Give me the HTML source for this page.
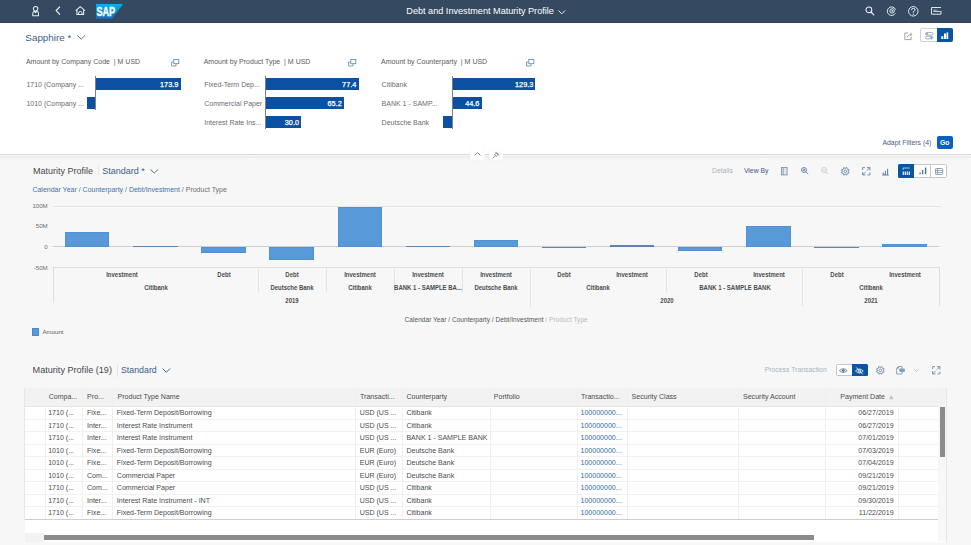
<!DOCTYPE html>
<html><head><meta charset="utf-8"><style>
*{margin:0;padding:0;box-sizing:border-box}
html,body{width:971px;height:545px;overflow:hidden;background:#f7f7f7;font-family:"Liberation Sans",sans-serif;color:#32363a}
.a{position:absolute;white-space:nowrap}
svg{position:absolute;overflow:visible}
</style></head><body>
<div class="a" style="left:0px;top:0px;width:971.00px;height:23.00px;background:#354a61;"></div>
<div class="a" style="left:0px;top:21.5px;width:971.00px;height:1.50px;background:#34424f;"></div>
<svg style="left:31.5px;top:5.6px;" width="8.4" height="10.4" viewBox="0 0 8.4 10.4"><circle cx="3.6" cy="2.8" r="2.25" fill="none" stroke="#e9eef3" stroke-width="1.05"/><path d="M0.8 9.7 V7.3 Q0.8 5.6 2.5 5.6 H2.8 L3.6 6.6 L4.4 5.6 H4.7 Q6.5 5.6 6.5 7.3 V9.7 Z" fill="none" stroke="#e9eef3" stroke-width="1.05" stroke-linejoin="round"/></svg>
<svg style="left:55px;top:6.2px;" width="6" height="9.4" viewBox="0 0 6 9.4"><path d="M4.9 0.6 L1.2 4.6 L4.9 8.7" fill="none" stroke="#eef2f6" stroke-width="1.25"/></svg>
<svg style="left:74.8px;top:6.3px;" width="10.6" height="9.2" viewBox="0 0 10.6 9.2"><path d="M0.7 4.6 L5.3 0.7 L9.9 4.6 M1.9 3.7 V8.5 H8.7 V3.7" fill="none" stroke="#e9eef3" stroke-width="1.05" stroke-linejoin="round"/><path d="M3.6 8.5 V7 Q3.6 5.5 5.3 5.5 Q7 5.5 7 7 V8.5" fill="none" stroke="#e9eef3" stroke-width="1"/></svg>
<svg style="left:95.8px;top:4.1px;" width="27.2" height="14.8" viewBox="0 0 27.2 14.8"><defs><linearGradient id="sg" x1="0" y1="0" x2="0" y2="1"><stop offset="0" stop-color="#00b4ef"/><stop offset="1" stop-color="#1a6cc0"/></linearGradient></defs><path d="M0 0 H27.1 L16 14.8 H0 Z" fill="url(#sg)"/><text x="0.4" y="11.95" font-family="Liberation Sans" font-weight="bold" font-size="12.2" fill="#fff" stroke="#fff" stroke-width="0.35" textLength="18.8" lengthAdjust="spacingAndGlyphs">SAP</text></svg>
<div class="a" style="left:406.3px;top:6.83px;font-size:9.15px;color:#ffffff;font-weight:normal;line-height:9.15px;">Debt and Investment Maturity Profile</div>
<svg style="left:557.5px;top:9.5px;" width="8" height="5" viewBox="0 0 8 5"><path d="M0.5 0.5 L3.75 3.8 L7 0.5" fill="none" stroke="#fff" stroke-width="0.9"/></svg>
<svg style="left:864.5px;top:6.3px;" width="10" height="9.5" viewBox="0 0 10 9.5"><circle cx="3.9" cy="3.9" r="2.9" fill="none" stroke="#e9eef3" stroke-width="1.05"/><path d="M6 6 L8.8 8.8" stroke="#e9eef3" stroke-width="1.2" stroke-linecap="round"/></svg>
<svg style="left:886.8px;top:6px;" width="9.4" height="10" viewBox="0 0 9.4 10"><path d="M8.3 7.4 A4.3 4.3 0 1 1 8.6 3.6" fill="none" stroke="#e9eef3" stroke-width="0.95"/><circle cx="5.1" cy="4.9" r="2.2" fill="none" stroke="#e9eef3" stroke-width="1"/><circle cx="5.2" cy="4.9" r="0.8" fill="#e9eef3"/></svg>
<svg style="left:908.4px;top:5.9px;" width="10.6" height="10.6" viewBox="0 0 10.6 10.6"><circle cx="5.3" cy="5.3" r="4.75" fill="none" stroke="#e9eef3" stroke-width="0.95"/><path d="M3.5 4.1 Q3.5 2.3 5.3 2.3 Q7.1 2.3 7.1 3.9 Q7.1 5 5.3 5.7 V6.8" fill="none" stroke="#e9eef3" stroke-width="1"/><circle cx="5.3" cy="8.2" r="0.6" fill="#e9eef3"/></svg>
<svg style="left:930.9px;top:7px;" width="10.4" height="7.8" viewBox="0 0 10.4 7.8"><path d="M10 0.5 H0.5 V7.2 H10 V4" fill="none" stroke="#e9eef3" stroke-width="0.95"/><path d="M2.4 3.2 H4.4 M2.4 4.5 H9.7" stroke="#dfe6ee" stroke-width="0.85"/><path d="M4.8 2.6 V3.8 M6 2.6 V3.8" stroke="#cfd8e2" stroke-width="0.6"/></svg>
<div class="a" style="left:0px;top:23px;width:971.00px;height:131.50px;background:#ffffff;"></div>
<div class="a" style="left:25.3px;top:32.65px;font-size:9.9px;color:#3a5f89;font-weight:normal;line-height:9.9px;">Sapphire *</div>
<svg style="left:76.8px;top:35px;" width="8.4" height="5" viewBox="0 0 8.4 5"><path d="M0.5 0.5 L4.2 4.2 L7.9 0.5" fill="none" stroke="#3a5f89" stroke-width="0.9"/></svg>
<svg style="left:904.2px;top:31.5px;" width="9" height="8.2" viewBox="0 0 9 8.2"><path d="M4.2 1 H0.8 V7.6 H7.2 V4.8" fill="none" stroke="#8a96a2" stroke-width="0.85"/><path d="M2.8 5.6 Q3.6 2.6 7.4 2.4 M6 0.7 L8 2.4 L6.2 4.2" fill="none" stroke="#8a96a2" stroke-width="0.85"/></svg>
<div class="a" style="left:920.3px;top:28.4px;width:32.60px;height:13.70px;background:#fff;border:1px solid #cdd3d9;border-radius:2px;"></div>
<div class="a" style="left:936.8px;top:28.4px;width:16.10px;height:13.70px;background:#0a55a0;border-radius:0 2px 2px 0;"></div>
<svg style="left:924.6px;top:31.6px;" width="8.4" height="7.6" viewBox="0 0 8.4 7.6"><rect x="0.5" y="0.5" width="7.4" height="2.6" rx="1.3" fill="none" stroke="#8aa0b7" stroke-width="0.8"/><rect x="0.5" y="4.3" width="7.4" height="2.6" rx="1.3" fill="none" stroke="#8aa0b7" stroke-width="0.8"/><circle cx="2" cy="1.8" r="0.9" fill="#6d88a6"/><circle cx="6.2" cy="5.6" r="0.9" fill="#6d88a6"/></svg>
<svg style="left:941.3px;top:31.8px;" width="7.6" height="7.2" viewBox="0 0 7.6 7.2"><path d="M0.3 7 V4.2 H2.3 V7 Z M3 7 V1.5 H5 V7 Z M5.5 7 V0.4 H7.2 V7 Z" fill="#fff"/></svg>
<div class="a" style="left:25.9px;top:58.10px;font-size:7px;color:#585b5e;font-weight:normal;line-height:7px;">Amount by Company Code&nbsp; | M USD</div>
<svg style="left:170.5px;top:58.8px;" width="8.5" height="7.5" viewBox="0 0 8.5 7.5"><rect x="2.8" y="0.5" width="5" height="4.2" fill="none" stroke="#5b86b3" stroke-width="0.8"/><path d="M2.5 3 H0.6 V7 H5 V5" fill="none" stroke="#5b86b3" stroke-width="0.8"/></svg>
<div class="a" style="left:26.4px;top:80.60px;font-size:7px;color:#6a6d70;font-weight:normal;line-height:7px;">1710 (Company ...</div>
<div class="a" style="left:95.5px;top:77.8px;width:85.00px;height:12.20px;background:#0c50a2;"></div>
<div class="a" style="right:792.70px;top:80.85px;font-size:7.3px;color:#ffffff;font-weight:normal;line-height:7.3px;-webkit-text-stroke:0.25px #fff;">173.9</div>
<div class="a" style="left:26.4px;top:99.60px;font-size:7px;color:#6a6d70;font-weight:normal;line-height:7px;">1010 (Company ...</div>
<div class="a" style="left:87.1px;top:96.8px;width:7.90px;height:12.20px;background:#0c50a2;"></div>
<div class="a" style="left:95px;top:76.2px;width:0.80px;height:33.70px;background:#7d8084;"></div>
<div class="a" style="left:203.7px;top:58.10px;font-size:7px;color:#585b5e;font-weight:normal;line-height:7px;">Amount by Product Type&nbsp; | M USD</div>
<svg style="left:348px;top:58.8px;" width="8.5" height="7.5" viewBox="0 0 8.5 7.5"><rect x="2.8" y="0.5" width="5" height="4.2" fill="none" stroke="#5b86b3" stroke-width="0.8"/><path d="M2.5 3 H0.6 V7 H5 V5" fill="none" stroke="#5b86b3" stroke-width="0.8"/></svg>
<div class="a" style="left:204.2px;top:80.60px;font-size:7px;color:#6a6d70;font-weight:normal;line-height:7px;">Fixed-Term Dep...</div>
<div class="a" style="left:265.5px;top:77.8px;width:93.00px;height:12.20px;background:#0c50a2;"></div>
<div class="a" style="right:614.70px;top:80.85px;font-size:7.3px;color:#ffffff;font-weight:normal;line-height:7.3px;-webkit-text-stroke:0.25px #fff;">77.4</div>
<div class="a" style="left:204.2px;top:99.60px;font-size:7px;color:#6a6d70;font-weight:normal;line-height:7px;">Commercial Paper</div>
<div class="a" style="left:265.5px;top:96.8px;width:78.40px;height:12.20px;background:#0c50a2;"></div>
<div class="a" style="right:629.30px;top:99.85px;font-size:7.3px;color:#ffffff;font-weight:normal;line-height:7.3px;-webkit-text-stroke:0.25px #fff;">65.2</div>
<div class="a" style="left:204.2px;top:118.60px;font-size:7px;color:#6a6d70;font-weight:normal;line-height:7px;">Interest Rate Ins...</div>
<div class="a" style="left:265.5px;top:115.8px;width:35.70px;height:12.20px;background:#0c50a2;"></div>
<div class="a" style="right:672.00px;top:118.85px;font-size:7.3px;color:#ffffff;font-weight:normal;line-height:7.3px;-webkit-text-stroke:0.25px #fff;">30.0</div>
<div class="a" style="left:265px;top:76.2px;width:0.80px;height:52.70px;background:#7d8084;"></div>
<div class="a" style="left:381.1px;top:58.10px;font-size:7px;color:#585b5e;font-weight:normal;line-height:7px;">Amount by Counterparty&nbsp; | M USD</div>
<svg style="left:526px;top:58.8px;" width="8.5" height="7.5" viewBox="0 0 8.5 7.5"><rect x="2.8" y="0.5" width="5" height="4.2" fill="none" stroke="#5b86b3" stroke-width="0.8"/><path d="M2.5 3 H0.6 V7 H5 V5" fill="none" stroke="#5b86b3" stroke-width="0.8"/></svg>
<div class="a" style="left:381.6px;top:80.60px;font-size:7px;color:#6a6d70;font-weight:normal;line-height:7px;">Citibank</div>
<div class="a" style="left:452.8px;top:77.8px;width:82.70px;height:12.20px;background:#0c50a2;"></div>
<div class="a" style="right:437.70px;top:80.85px;font-size:7.3px;color:#ffffff;font-weight:normal;line-height:7.3px;-webkit-text-stroke:0.25px #fff;">129.3</div>
<div class="a" style="left:381.6px;top:99.60px;font-size:7px;color:#6a6d70;font-weight:normal;line-height:7px;">BANK 1 - SAMP...</div>
<div class="a" style="left:452.8px;top:96.8px;width:28.80px;height:12.20px;background:#0c50a2;"></div>
<div class="a" style="right:491.60px;top:99.85px;font-size:7.3px;color:#ffffff;font-weight:normal;line-height:7.3px;-webkit-text-stroke:0.25px #fff;">44.6</div>
<div class="a" style="left:381.6px;top:118.60px;font-size:7px;color:#6a6d70;font-weight:normal;line-height:7px;">Deutsche Bank</div>
<div class="a" style="left:442.7px;top:115.8px;width:9.60px;height:12.20px;background:#0c50a2;"></div>
<div class="a" style="left:452.3px;top:76.2px;width:0.80px;height:52.70px;background:#7d8084;"></div>
<div class="a" style="left:882.4px;top:139.55px;font-size:6.9px;color:#4a6283;font-weight:normal;line-height:6.9px;">Adapt Filters (4)</div>
<div class="a" style="left:936.7px;top:136.2px;width:16.50px;height:13.10px;background:#0b60bf;border-radius:2px;"></div>
<div class="a" style="left:944.8px;transform:translateX(-50%);top:139.55px;font-size:6.9px;color:#ffffff;font-weight:bold;line-height:6.9px;">Go</div>
<div class="a" style="left:0px;top:154.2px;width:971.00px;height:1.30px;background:#d8d8d8;"></div>
<div class="a" style="left:0px;top:155.5px;width:971.00px;height:4.50px;background:transparent;background:linear-gradient(#ececec,#f7f7f7);"></div>
<div class="a" style="left:470px;top:149px;width:15.00px;height:11.00px;background:#fff;border-radius:2px;box-shadow:0 0 1px rgba(0,0,0,0.12);"></div>
<svg style="left:474.3px;top:151.8px;" width="7" height="4" viewBox="0 0 7 4"><path d="M0.5 3.5 L3.5 0.5 L6.5 3.5" fill="none" stroke="#6a6d70" stroke-width="0.8"/></svg>
<div class="a" style="left:488.5px;top:149px;width:14.50px;height:11.00px;background:#fff;border-radius:2px;box-shadow:0 0 1px rgba(0,0,0,0.12);"></div>
<svg style="left:492px;top:150.8px;" width="8" height="8" viewBox="0 0 8 8"><path d="M3.5 1 L7 4.5 M4.5 1.8 L2.6 3.8 L4.2 5.4 L6.2 3.5 Z M3.4 4.6 L0.8 7.2" fill="none" stroke="#5d7790" stroke-width="0.8"/></svg>
<div style="position:absolute;left:0;top:0.5px;width:971px;height:545px">
<div class="a" style="left:33px;top:166.50px;font-size:9px;color:#45484b;font-weight:normal;line-height:9px;">Maturity Profile</div>
<div class="a" style="left:97.6px;top:164px;width:0.60px;height:12.00px;background:#e8e8e8;"></div>
<div class="a" style="left:102.2px;top:166.50px;font-size:9px;color:#3a5f89;font-weight:normal;line-height:9px;">Standard *</div>
<svg style="left:149.7px;top:168.9px;" width="8.6" height="4.6" viewBox="0 0 8.6 4.6"><path d="M0.5 0.5 L4.3 4 L8.1 0.5" fill="none" stroke="#4d5f73" stroke-width="0.9"/></svg>
<div class="a" style="left:32.4px;top:185.30px;font-size:7px;color:#6a6d70;font-weight:normal;line-height:7px;"><span style="color:#4273a8">Calendar Year</span> / <span style="color:#4273a8">Counterparty</span> / <span style="color:#4273a8">Debt/Investment</span> / Product Type</div>
<div style="position:absolute;left:0;top:-0.7px;width:971px;height:545px">
<div class="a" style="left:712px;top:168.00px;font-size:6.8px;color:#a9b4be;font-weight:normal;line-height:6.8px;">Details</div>
<div class="a" style="left:743.9px;top:167.97px;font-size:6.85px;color:#375a80;font-weight:normal;line-height:6.85px;">View By</div>
<svg style="left:781.2px;top:167.3px;" width="6.6" height="8.4" viewBox="0 0 6.6 8.4"><rect x="0.5" y="0.5" width="5.6" height="7.4" fill="#dde6ef" stroke="#7892ae" stroke-width="0.85"/><path d="M2.2 0.5 V7.9" stroke="#7892ae" stroke-width="0.8"/></svg>
<svg style="left:801px;top:167.5px;" width="7.5" height="7.5" viewBox="0 0 7.5 7.5"><circle cx="3" cy="3" r="2.5" fill="none" stroke="#5b7fa6" stroke-width="0.9"/><path d="M1.6 3 H4.4 M3 1.6 V4.4 M4.8 4.8 L7.2 7.2" stroke="#5b7fa6" stroke-width="0.9"/></svg>
<svg style="left:821px;top:167.5px;" width="7.5" height="7.5" viewBox="0 0 7.5 7.5"><circle cx="3" cy="3" r="2.5" fill="none" stroke="#c4ccd4" stroke-width="0.9"/><path d="M1.6 3 H4.4 M4.8 4.8 L7.2 7.2" stroke="#c4ccd4" stroke-width="0.9"/></svg>
<svg style="left:841.4px;top:167.2px;" width="8.6" height="8.6" viewBox="0 0 8.6 8.6"><path d="M7.30 4.30 L7.25 4.83 L8.07 5.28 L7.66 6.27 L6.76 6.02 L6.42 6.42 L6.02 6.76 L6.27 7.66 L5.28 8.07 L4.83 7.25 L4.30 7.30 L3.77 7.25 L3.32 8.07 L2.33 7.66 L2.58 6.76 L2.18 6.42 L1.84 6.02 L0.94 6.27 L0.53 5.28 L1.35 4.83 L1.30 4.30 L1.35 3.77 L0.53 3.32 L0.94 2.33 L1.84 2.58 L2.18 2.18 L2.58 1.84 L2.33 0.94 L3.32 0.53 L3.77 1.35 L4.30 1.30 L4.83 1.35 L5.28 0.53 L6.27 0.94 L6.02 1.84 L6.42 2.18 L6.76 2.58 L7.66 2.33 L8.07 3.32 L7.25 3.77 Z" fill="none" stroke="#5b7fa6" stroke-width="0.9" stroke-linejoin="round"/><circle cx="4.3" cy="4.3" r="1.3" fill="none" stroke="#5b7fa6" stroke-width="0.8"/></svg>
<svg style="left:861.6px;top:167.3px;" width="8.5" height="8.5" viewBox="0 0 8.5 8.5"><path d="M5 0.6 H7.9 V3.5 M7.9 0.6 L4.9 3.6 M3.5 7.9 H0.6 V5 M0.6 7.9 L3.6 4.9 M0.6 3 V0.6 H3 M7.9 5.5 V7.9 H5.5" fill="none" stroke="#5b7fa6" stroke-width="0.85"/></svg>
<svg style="left:882.4px;top:167.8px;" width="7" height="7.4" viewBox="0 0 7 7.4"><path d="M0.3 7 H6.8 M1.3 6.6 V4.6 M3.4 6.6 V2.8 M5.6 6.6 V0.8" stroke="#5b7fa6" stroke-width="1.05"/></svg>
<div class="a" style="left:898.1px;top:164.4px;width:48.70px;height:13.50px;background:#fff;border:1px solid #c3c7cc;border-radius:1.5px;"></div>
<div class="a" style="left:898.1px;top:164.4px;width:15.90px;height:13.50px;background:#0a55a0;border-radius:1.5px 0 0 1.5px;"></div>
<div class="a" style="left:930.4px;top:164.4px;width:0.80px;height:13.50px;background:#c3c7cc;"></div>
<svg style="left:901.5px;top:166.8px;" width="9" height="8.5" viewBox="0 0 9 8.5"><path d="M0.8 1 H7.8" stroke="#cfe0f3" stroke-width="0.8"/><path d="M1.1 1 V2.8" stroke="#cfe0f3" stroke-width="0.9"/><path d="M1.3 8 V4.6 M3.3 8 V4.6 M5.3 8 V4.6 M7.3 8 V4.6" stroke="#e8f1fb" stroke-width="1.25"/></svg>
<svg style="left:918.5px;top:167.5px;" width="8" height="7.5" viewBox="0 0 8 7.5"><path d="M1.1 7.2 V5.4 M3.6 7.2 V3 M6.6 7.2 V0.5" stroke="#4d6f94" stroke-width="1.4"/></svg>
<svg style="left:934.6px;top:167.9px;" width="8.2" height="7" viewBox="0 0 8.2 7"><rect x="0.5" y="0.5" width="7.2" height="6" rx="0.8" fill="none" stroke="#7f97b0" stroke-width="0.9"/><path d="M0.5 2.5 H7.7 M0.5 4.5 H7.7 M2.6 0.5 V6.5" stroke="#7f97b0" stroke-width="0.8"/></svg>
</div>
<div class="a" style="right:923.30px;top:202.45px;font-size:6.1px;color:#6a6d70;font-weight:normal;line-height:6.1px;">100M</div>
<div class="a" style="right:923.30px;top:222.95px;font-size:6.1px;color:#6a6d70;font-weight:normal;line-height:6.1px;">50M</div>
<div class="a" style="right:923.30px;top:243.35px;font-size:6.1px;color:#6a6d70;font-weight:normal;line-height:6.1px;">0</div>
<div class="a" style="right:923.30px;top:264.15px;font-size:6.1px;color:#6a6d70;font-weight:normal;line-height:6.1px;">-50M</div>
<div class="a" style="left:52.6px;top:205.0px;width:888.40px;height:0.60px;background:#e6e6e6;"></div>
<div class="a" style="left:52.6px;top:245.8px;width:886.90px;height:1.00px;background:#cfcfcf;"></div>
<div class="a" style="left:65.1px;top:231.8px;width:44.30px;height:14.30px;background:#5899da;box-shadow:inset 0 0 0 0.5px #4f88c6;"></div>
<div class="a" style="left:133.22px;top:245.0px;width:44.29px;height:1.10px;background:#5f84ad;"></div>
<div class="a" style="left:201.33px;top:246.1px;width:44.30px;height:6.10px;background:#5899da;box-shadow:inset 0 0 0 0.5px #4f88c6;"></div>
<div class="a" style="left:269.44px;top:246.1px;width:44.31px;height:13.50px;background:#5899da;box-shadow:inset 0 0 0 0.5px #4f88c6;"></div>
<div class="a" style="left:337.56px;top:206.2px;width:44.30px;height:39.90px;background:#5899da;box-shadow:inset 0 0 0 0.5px #4f88c6;"></div>
<div class="a" style="left:405.68px;top:245.2px;width:44.30px;height:0.90px;background:#5f84ad;"></div>
<div class="a" style="left:473.79px;top:239.7px;width:44.30px;height:6.40px;background:#5899da;box-shadow:inset 0 0 0 0.5px #4f88c6;"></div>
<div class="a" style="left:541.9px;top:246.1px;width:44.30px;height:1.30px;background:#5f84ad;"></div>
<div class="a" style="left:610.02px;top:244.2px;width:44.30px;height:1.90px;background:#5f84ad;"></div>
<div class="a" style="left:678.13px;top:246.1px;width:44.30px;height:4.00px;background:#5899da;box-shadow:inset 0 0 0 0.5px #4f88c6;"></div>
<div class="a" style="left:746.25px;top:225.0px;width:44.30px;height:21.10px;background:#5899da;box-shadow:inset 0 0 0 0.5px #4f88c6;"></div>
<div class="a" style="left:814.37px;top:246.1px;width:44.29px;height:1.20px;background:#5f84ad;"></div>
<div class="a" style="left:882.48px;top:243.1px;width:44.30px;height:3.00px;background:#5899da;box-shadow:inset 0 0 0 0.5px #4f88c6;"></div>
<div class="a" style="left:53.5px;top:266.4px;width:885.80px;height:0.70px;background:#dedede;"></div>
<div class="a" style="left:53.2px;top:266.4px;width:0.70px;height:36.60px;background:#dedede;"></div>
<div class="a" style="left:938.7px;top:266.4px;width:0.70px;height:39.10px;background:#dedede;"></div>
<div class="a" style="left:257.54px;top:266.4px;width:0.70px;height:25.60px;background:#e3e3e3;"></div>
<div class="a" style="left:325.66px;top:266.4px;width:0.70px;height:25.60px;background:#e3e3e3;"></div>
<div class="a" style="left:393.77px;top:266.4px;width:0.70px;height:26.60px;background:#e3e3e3;"></div>
<div class="a" style="left:461.89px;top:266.4px;width:0.70px;height:26.60px;background:#e3e3e3;"></div>
<div class="a" style="left:530.0px;top:266.4px;width:0.70px;height:40.60px;background:#e3e3e3;"></div>
<div class="a" style="left:666.24px;top:266.4px;width:0.69px;height:25.60px;background:#e3e3e3;"></div>
<div class="a" style="left:802.47px;top:266.4px;width:0.69px;height:39.60px;background:#e3e3e3;"></div>
<div class="a" style="left:121.61px;top:271.95px;font-size:6.5px;line-height:6.5px;color:#4a4d50;font-weight:bold;transform:translateX(-50%) scaleX(0.92);">Investment</div>
<div class="a" style="left:223.79px;top:271.95px;font-size:6.5px;line-height:6.5px;color:#4a4d50;font-weight:bold;transform:translateX(-50%) scaleX(0.92);">Debt</div>
<div class="a" style="left:291.9px;top:271.95px;font-size:6.5px;line-height:6.5px;color:#4a4d50;font-weight:bold;transform:translateX(-50%) scaleX(0.92);">Debt</div>
<div class="a" style="left:360.02px;top:271.95px;font-size:6.5px;line-height:6.5px;color:#4a4d50;font-weight:bold;transform:translateX(-50%) scaleX(0.92);">Investment</div>
<div class="a" style="left:428.13px;top:271.95px;font-size:6.5px;line-height:6.5px;color:#4a4d50;font-weight:bold;transform:translateX(-50%) scaleX(0.92);">Investment</div>
<div class="a" style="left:496.25px;top:271.95px;font-size:6.5px;line-height:6.5px;color:#4a4d50;font-weight:bold;transform:translateX(-50%) scaleX(0.92);">Investment</div>
<div class="a" style="left:564.36px;top:271.95px;font-size:6.5px;line-height:6.5px;color:#4a4d50;font-weight:bold;transform:translateX(-50%) scaleX(0.92);">Debt</div>
<div class="a" style="left:632.48px;top:271.95px;font-size:6.5px;line-height:6.5px;color:#4a4d50;font-weight:bold;transform:translateX(-50%) scaleX(0.92);">Investment</div>
<div class="a" style="left:700.59px;top:271.95px;font-size:6.5px;line-height:6.5px;color:#4a4d50;font-weight:bold;transform:translateX(-50%) scaleX(0.92);">Debt</div>
<div class="a" style="left:768.71px;top:271.95px;font-size:6.5px;line-height:6.5px;color:#4a4d50;font-weight:bold;transform:translateX(-50%) scaleX(0.92);">Investment</div>
<div class="a" style="left:836.82px;top:271.95px;font-size:6.5px;line-height:6.5px;color:#4a4d50;font-weight:bold;transform:translateX(-50%) scaleX(0.92);">Debt</div>
<div class="a" style="left:904.94px;top:271.95px;font-size:6.5px;line-height:6.5px;color:#4a4d50;font-weight:bold;transform:translateX(-50%) scaleX(0.92);">Investment</div>
<div class="a" style="left:155.67px;top:284.75px;font-size:6.5px;line-height:6.5px;color:#4a4d50;font-weight:bold;transform:translateX(-50%) scaleX(0.92);">Citibank</div>
<div class="a" style="left:291.9px;top:284.75px;font-size:6.5px;line-height:6.5px;color:#4a4d50;font-weight:bold;transform:translateX(-50%) scaleX(0.92);">Deutsche Bank</div>
<div class="a" style="left:360.02px;top:284.75px;font-size:6.5px;line-height:6.5px;color:#4a4d50;font-weight:bold;transform:translateX(-50%) scaleX(0.92);">Citibank</div>
<div class="a" style="left:428.13px;top:284.75px;font-size:6.5px;line-height:6.5px;color:#4a4d50;font-weight:bold;transform:translateX(-50%) scaleX(0.92);">BANK 1 - SAMPLE BA...</div>
<div class="a" style="left:496.25px;top:284.75px;font-size:6.5px;line-height:6.5px;color:#4a4d50;font-weight:bold;transform:translateX(-50%) scaleX(0.92);">Deutsche Bank</div>
<div class="a" style="left:598.42px;top:284.75px;font-size:6.5px;line-height:6.5px;color:#4a4d50;font-weight:bold;transform:translateX(-50%) scaleX(0.92);">Citibank</div>
<div class="a" style="left:734.65px;top:284.75px;font-size:6.5px;line-height:6.5px;color:#4a4d50;font-weight:bold;transform:translateX(-50%) scaleX(0.92);">BANK 1 - SAMPLE BANK</div>
<div class="a" style="left:870.88px;top:284.75px;font-size:6.5px;line-height:6.5px;color:#4a4d50;font-weight:bold;transform:translateX(-50%) scaleX(0.92);">Citibank</div>
<div class="a" style="left:291.9px;top:297.75px;font-size:6.5px;line-height:6.5px;color:#4a4d50;font-weight:bold;transform:translateX(-50%) scaleX(0.92);">2019</div>
<div class="a" style="left:666.53px;top:297.75px;font-size:6.5px;line-height:6.5px;color:#4a4d50;font-weight:bold;transform:translateX(-50%) scaleX(0.92);">2020</div>
<div class="a" style="left:870.88px;top:297.75px;font-size:6.5px;line-height:6.5px;color:#4a4d50;font-weight:bold;transform:translateX(-50%) scaleX(0.92);">2021</div>
<div class="a" style="left:404.6px;top:316.30px;font-size:6.6px;color:#55585b;font-weight:normal;line-height:6.6px;">Calendar Year / Counterparty / Debt/Investment <span style="color:#b9bcc0">/ Product Type</span></div>
<div class="a" style="left:32.4px;top:327.8px;width:7.10px;height:7.40px;background:#5899da;border:0.6px solid #4a86c8;"></div>
<div class="a" style="left:42.5px;top:328.55px;font-size:6.1px;color:#595c5f;font-weight:normal;line-height:6.1px;">Amount</div>
</div>
<div class="a" style="left:32.6px;top:365.65px;font-size:9.1px;color:#45484b;font-weight:normal;line-height:9.1px;">Maturity Profile (19)</div>
<div class="a" style="left:116.5px;top:364px;width:0.60px;height:12.50px;background:#e5e5e5;"></div>
<div class="a" style="left:121px;top:365.80px;font-size:8.8px;color:#3a5f89;font-weight:normal;line-height:8.8px;">Standard</div>
<svg style="left:161.6px;top:367.8px;" width="8.6" height="5" viewBox="0 0 8.6 5"><path d="M0.5 0.5 L4.3 4.3 L8.1 0.5" fill="none" stroke="#3a5f89" stroke-width="0.95"/></svg>
<div class="a" style="left:764.7px;top:366.57px;font-size:6.85px;color:#a9b4be;font-weight:normal;line-height:6.85px;">Process Transaction</div>
<div class="a" style="left:835.6px;top:363.5px;width:32.10px;height:12.80px;background:#fff;border:1px solid #c3c7cc;border-radius:1.5px;"></div>
<div class="a" style="left:852px;top:363.5px;width:15.70px;height:12.80px;background:#0a55a0;border-radius:0 1.5px 1.5px 0;"></div>
<svg style="left:839.3px;top:367.6px;" width="8.6" height="5.2" viewBox="0 0 8.6 5.2"><path d="M0.4 2.6 Q4.3 -1.2 8.2 2.6 Q4.3 6.4 0.4 2.6 Z" fill="none" stroke="#4d6f94" stroke-width="0.8"/><circle cx="4.3" cy="2.6" r="1.4" fill="#4d6f94"/></svg>
<svg style="left:855.3px;top:366.6px;" width="8.8" height="7.8" viewBox="0 0 8.8 7.8"><path d="M0.5 4 Q4.4 0 8.3 4 Q4.4 8 0.5 4 Z" fill="none" stroke="#e8f1fb" stroke-width="0.85"/><circle cx="4.4" cy="4" r="1.35" fill="none" stroke="#e8f1fb" stroke-width="0.8"/><path d="M1.2 0.4 L7.8 7.4" stroke="#e8f1fb" stroke-width="0.9"/></svg>
<svg style="left:876px;top:366.1px;" width="8.6" height="8.6" viewBox="0 0 8.6 8.6"><path d="M7.30 4.30 L7.25 4.83 L8.07 5.28 L7.66 6.27 L6.76 6.02 L6.42 6.42 L6.02 6.76 L6.27 7.66 L5.28 8.07 L4.83 7.25 L4.30 7.30 L3.77 7.25 L3.32 8.07 L2.33 7.66 L2.58 6.76 L2.18 6.42 L1.84 6.02 L0.94 6.27 L0.53 5.28 L1.35 4.83 L1.30 4.30 L1.35 3.77 L0.53 3.32 L0.94 2.33 L1.84 2.58 L2.18 2.18 L2.58 1.84 L2.33 0.94 L3.32 0.53 L3.77 1.35 L4.30 1.30 L4.83 1.35 L5.28 0.53 L6.27 0.94 L6.02 1.84 L6.42 2.18 L6.76 2.58 L7.66 2.33 L8.07 3.32 L7.25 3.77 Z" fill="none" stroke="#6a85a3" stroke-width="0.9" stroke-linejoin="round"/><circle cx="4.3" cy="4.3" r="1.3" fill="none" stroke="#6a85a3" stroke-width="0.8"/></svg>
<svg style="left:896px;top:366px;" width="9.5" height="8.6" viewBox="0 0 9.5 8.6"><path d="M2.6 0.5 H6 V8 H0.6 V2.5 Z" fill="none" stroke="#7d8fa3" stroke-width="0.8"/><path d="M2.6 0.5 L0.6 2.5 H2.6 Z" fill="#4d6f94"/><rect x="3.2" y="2.6" width="5.8" height="3.3" rx="1.2" fill="#8aa0b7"/></svg>
<svg style="left:914px;top:369.2px;" width="5" height="2.8" viewBox="0 0 5 2.8"><path d="M0.3 0.3 L2.5 2.4 L4.7 0.3" fill="none" stroke="#a9b4be" stroke-width="0.7"/></svg>
<svg style="left:932.4px;top:366px;" width="8.5" height="8.5" viewBox="0 0 8.5 8.5"><path d="M5 0.6 H7.9 V3.5 M7.9 0.6 L4.9 3.6 M3.5 7.9 H0.6 V5 M0.6 7.9 L3.6 4.9 M0.6 3 V0.6 H3 M7.9 5.5 V7.9 H5.5" fill="none" stroke="#6a85a3" stroke-width="0.85"/></svg>
<div class="a" style="left:24.6px;top:388px;width:922.40px;height:153.50px;background:#ffffff;"></div>
<div class="a" style="left:24.6px;top:388px;width:922.40px;height:18.70px;background:#f2f2f2;"></div>
<div class="a" style="left:24.6px;top:406.3px;width:913.70px;height:0.60px;background:#e6e6e6;"></div>
<div class="a" style="left:44.7px;top:388px;width:0.60px;height:131.20px;background:#efefef;"></div>
<div class="a" style="left:82.10000000000001px;top:388px;width:0.60px;height:131.20px;background:#efefef;"></div>
<div class="a" style="left:112.3px;top:388px;width:0.60px;height:131.20px;background:#efefef;"></div>
<div class="a" style="left:355.09999999999997px;top:388px;width:0.60px;height:131.20px;background:#efefef;"></div>
<div class="a" style="left:401.5px;top:388px;width:0.60px;height:131.20px;background:#efefef;"></div>
<div class="a" style="left:489.5px;top:388px;width:0.60px;height:131.20px;background:#efefef;"></div>
<div class="a" style="left:577.0px;top:388px;width:0.60px;height:131.20px;background:#efefef;"></div>
<div class="a" style="left:627.0px;top:388px;width:0.60px;height:131.20px;background:#efefef;"></div>
<div class="a" style="left:737.9000000000001px;top:388px;width:0.60px;height:131.20px;background:#efefef;"></div>
<div class="a" style="left:825.3000000000001px;top:388px;width:0.60px;height:131.20px;background:#efefef;"></div>
<div class="a" style="left:897.5px;top:388px;width:0.60px;height:131.20px;background:#efefef;"></div>
<div class="a" style="left:938.1px;top:388px;width:0.60px;height:131.20px;background:#efefef;"></div>
<div class="a" style="left:48.7px;top:393.08px;font-size:7.05px;color:#4a4d50;font-weight:normal;line-height:7.05px;">Compa...</div>
<div class="a" style="left:87.1px;top:393.08px;font-size:7.05px;color:#4a4d50;font-weight:normal;line-height:7.05px;">Pro...</div>
<div class="a" style="left:117.5px;top:393.08px;font-size:7.05px;color:#4a4d50;font-weight:normal;line-height:7.05px;">Product Type Name</div>
<div class="a" style="left:360px;top:393.08px;font-size:7.05px;color:#4a4d50;font-weight:normal;line-height:7.05px;">Transacti...</div>
<div class="a" style="left:406.4px;top:393.08px;font-size:7.05px;color:#4a4d50;font-weight:normal;line-height:7.05px;">Counterparty</div>
<div class="a" style="left:493.8px;top:393.08px;font-size:7.05px;color:#4a4d50;font-weight:normal;line-height:7.05px;">Portfolio</div>
<div class="a" style="left:581px;top:393.08px;font-size:7.05px;color:#4a4d50;font-weight:normal;line-height:7.05px;">Transactio...</div>
<div class="a" style="left:631.6px;top:393.08px;font-size:7.05px;color:#4a4d50;font-weight:normal;line-height:7.05px;">Security Class</div>
<div class="a" style="left:743px;top:393.08px;font-size:7.05px;color:#4a4d50;font-weight:normal;line-height:7.05px;">Security Account</div>
<div class="a" style="right:86.00px;top:393.08px;font-size:7.05px;color:#4a4d50;font-weight:normal;line-height:7.05px;">Payment Date</div>
<svg style="left:889px;top:394.5px;" width="4.5" height="4" viewBox="0 0 4.5 4"><path d="M0.2 3.6 L2.25 0.4 L4.3 3.6 Z" fill="#b0b8c0"/><path d="M0.2 3.9 H4.3" stroke="#b0b8c0" stroke-width="0.5"/></svg>
<div class="a" style="left:24.6px;top:418.9px;width:913.70px;height:0.60px;background:#f1f1f1;"></div>
<div class="a" style="left:48.2px;top:409.32px;font-size:7.05px;color:#4a4d50;font-weight:normal;line-height:7.05px;">1710 (...</div>
<div class="a" style="left:87px;top:409.32px;font-size:7.05px;color:#4a4d50;font-weight:normal;line-height:7.05px;">Fixe...</div>
<div class="a" style="left:116.8px;top:409.32px;font-size:7.05px;color:#4a4d50;font-weight:normal;line-height:7.05px;">Fixed-Term Deposit/Borrowing</div>
<div class="a" style="left:359.7px;top:409.32px;font-size:7.05px;color:#4a4d50;font-weight:normal;line-height:7.05px;">USD (US ...</div>
<div class="a" style="left:406.4px;top:409.32px;font-size:7.05px;color:#4a4d50;font-weight:normal;line-height:7.05px;">Citibank</div>
<div class="a" style="left:580.5px;top:409.32px;font-size:7.05px;color:#2d6ca8;font-weight:normal;line-height:7.05px;">100000000...</div>
<div class="a" style="right:77.40px;top:409.32px;font-size:7.05px;color:#4a4d50;font-weight:normal;line-height:7.05px;">06/27/2019</div>
<div class="a" style="left:24.6px;top:431.4px;width:913.70px;height:0.60px;background:#f1f1f1;"></div>
<div class="a" style="left:48.2px;top:421.82px;font-size:7.05px;color:#4a4d50;font-weight:normal;line-height:7.05px;">1710 (...</div>
<div class="a" style="left:87px;top:421.82px;font-size:7.05px;color:#4a4d50;font-weight:normal;line-height:7.05px;">Inter...</div>
<div class="a" style="left:116.8px;top:421.82px;font-size:7.05px;color:#4a4d50;font-weight:normal;line-height:7.05px;">Interest Rate Instrument</div>
<div class="a" style="left:359.7px;top:421.82px;font-size:7.05px;color:#4a4d50;font-weight:normal;line-height:7.05px;">USD (US ...</div>
<div class="a" style="left:406.4px;top:421.82px;font-size:7.05px;color:#4a4d50;font-weight:normal;line-height:7.05px;">Citibank</div>
<div class="a" style="left:580.5px;top:421.82px;font-size:7.05px;color:#2d6ca8;font-weight:normal;line-height:7.05px;">100000000...</div>
<div class="a" style="right:77.40px;top:421.82px;font-size:7.05px;color:#4a4d50;font-weight:normal;line-height:7.05px;">06/27/2019</div>
<div class="a" style="left:24.6px;top:443.9px;width:913.70px;height:0.60px;background:#f1f1f1;"></div>
<div class="a" style="left:48.2px;top:434.32px;font-size:7.05px;color:#4a4d50;font-weight:normal;line-height:7.05px;">1710 (...</div>
<div class="a" style="left:87px;top:434.32px;font-size:7.05px;color:#4a4d50;font-weight:normal;line-height:7.05px;">Inter...</div>
<div class="a" style="left:116.8px;top:434.32px;font-size:7.05px;color:#4a4d50;font-weight:normal;line-height:7.05px;">Interest Rate Instrument</div>
<div class="a" style="left:359.7px;top:434.32px;font-size:7.05px;color:#4a4d50;font-weight:normal;line-height:7.05px;">USD (US ...</div>
<div class="a" style="left:406.4px;top:434.32px;font-size:7.05px;color:#4a4d50;font-weight:normal;line-height:7.05px;">BANK 1 - SAMPLE BANK</div>
<div class="a" style="left:580.5px;top:434.32px;font-size:7.05px;color:#2d6ca8;font-weight:normal;line-height:7.05px;">100000000...</div>
<div class="a" style="right:77.40px;top:434.32px;font-size:7.05px;color:#4a4d50;font-weight:normal;line-height:7.05px;">07/01/2019</div>
<div class="a" style="left:24.6px;top:456.4px;width:913.70px;height:0.60px;background:#f1f1f1;"></div>
<div class="a" style="left:48.2px;top:446.82px;font-size:7.05px;color:#4a4d50;font-weight:normal;line-height:7.05px;">1010 (...</div>
<div class="a" style="left:87px;top:446.82px;font-size:7.05px;color:#4a4d50;font-weight:normal;line-height:7.05px;">Fixe...</div>
<div class="a" style="left:116.8px;top:446.82px;font-size:7.05px;color:#4a4d50;font-weight:normal;line-height:7.05px;">Fixed-Term Deposit/Borrowing</div>
<div class="a" style="left:359.7px;top:446.82px;font-size:7.05px;color:#4a4d50;font-weight:normal;line-height:7.05px;">EUR (Euro)</div>
<div class="a" style="left:406.4px;top:446.82px;font-size:7.05px;color:#4a4d50;font-weight:normal;line-height:7.05px;">Deutsche Bank</div>
<div class="a" style="left:580.5px;top:446.82px;font-size:7.05px;color:#2d6ca8;font-weight:normal;line-height:7.05px;">100000000...</div>
<div class="a" style="right:77.40px;top:446.82px;font-size:7.05px;color:#4a4d50;font-weight:normal;line-height:7.05px;">07/03/2019</div>
<div class="a" style="left:24.6px;top:468.9px;width:913.70px;height:0.60px;background:#f1f1f1;"></div>
<div class="a" style="left:48.2px;top:459.32px;font-size:7.05px;color:#4a4d50;font-weight:normal;line-height:7.05px;">1010 (...</div>
<div class="a" style="left:87px;top:459.32px;font-size:7.05px;color:#4a4d50;font-weight:normal;line-height:7.05px;">Fixe...</div>
<div class="a" style="left:116.8px;top:459.32px;font-size:7.05px;color:#4a4d50;font-weight:normal;line-height:7.05px;">Fixed-Term Deposit/Borrowing</div>
<div class="a" style="left:359.7px;top:459.32px;font-size:7.05px;color:#4a4d50;font-weight:normal;line-height:7.05px;">EUR (Euro)</div>
<div class="a" style="left:406.4px;top:459.32px;font-size:7.05px;color:#4a4d50;font-weight:normal;line-height:7.05px;">Deutsche Bank</div>
<div class="a" style="left:580.5px;top:459.32px;font-size:7.05px;color:#2d6ca8;font-weight:normal;line-height:7.05px;">100000000...</div>
<div class="a" style="right:77.40px;top:459.32px;font-size:7.05px;color:#4a4d50;font-weight:normal;line-height:7.05px;">07/04/2019</div>
<div class="a" style="left:24.6px;top:481.4px;width:913.70px;height:0.60px;background:#f1f1f1;"></div>
<div class="a" style="left:48.2px;top:471.82px;font-size:7.05px;color:#4a4d50;font-weight:normal;line-height:7.05px;">1010 (...</div>
<div class="a" style="left:87px;top:471.82px;font-size:7.05px;color:#4a4d50;font-weight:normal;line-height:7.05px;">Com...</div>
<div class="a" style="left:116.8px;top:471.82px;font-size:7.05px;color:#4a4d50;font-weight:normal;line-height:7.05px;">Commercial Paper</div>
<div class="a" style="left:359.7px;top:471.82px;font-size:7.05px;color:#4a4d50;font-weight:normal;line-height:7.05px;">EUR (Euro)</div>
<div class="a" style="left:406.4px;top:471.82px;font-size:7.05px;color:#4a4d50;font-weight:normal;line-height:7.05px;">Deutsche Bank</div>
<div class="a" style="left:580.5px;top:471.82px;font-size:7.05px;color:#2d6ca8;font-weight:normal;line-height:7.05px;">100000000...</div>
<div class="a" style="right:77.40px;top:471.82px;font-size:7.05px;color:#4a4d50;font-weight:normal;line-height:7.05px;">09/21/2019</div>
<div class="a" style="left:24.6px;top:493.9px;width:913.70px;height:0.60px;background:#f1f1f1;"></div>
<div class="a" style="left:48.2px;top:484.32px;font-size:7.05px;color:#4a4d50;font-weight:normal;line-height:7.05px;">1710 (...</div>
<div class="a" style="left:87px;top:484.32px;font-size:7.05px;color:#4a4d50;font-weight:normal;line-height:7.05px;">Com...</div>
<div class="a" style="left:116.8px;top:484.32px;font-size:7.05px;color:#4a4d50;font-weight:normal;line-height:7.05px;">Commercial Paper</div>
<div class="a" style="left:359.7px;top:484.32px;font-size:7.05px;color:#4a4d50;font-weight:normal;line-height:7.05px;">USD (US ...</div>
<div class="a" style="left:406.4px;top:484.32px;font-size:7.05px;color:#4a4d50;font-weight:normal;line-height:7.05px;">Citibank</div>
<div class="a" style="left:580.5px;top:484.32px;font-size:7.05px;color:#2d6ca8;font-weight:normal;line-height:7.05px;">100000000...</div>
<div class="a" style="right:77.40px;top:484.32px;font-size:7.05px;color:#4a4d50;font-weight:normal;line-height:7.05px;">09/21/2019</div>
<div class="a" style="left:24.6px;top:506.4px;width:913.70px;height:0.60px;background:#f1f1f1;"></div>
<div class="a" style="left:48.2px;top:496.82px;font-size:7.05px;color:#4a4d50;font-weight:normal;line-height:7.05px;">1710 (...</div>
<div class="a" style="left:87px;top:496.82px;font-size:7.05px;color:#4a4d50;font-weight:normal;line-height:7.05px;">Inter...</div>
<div class="a" style="left:116.8px;top:496.82px;font-size:7.05px;color:#4a4d50;font-weight:normal;line-height:7.05px;">Interest Rate Instrument - INT</div>
<div class="a" style="left:359.7px;top:496.82px;font-size:7.05px;color:#4a4d50;font-weight:normal;line-height:7.05px;">USD (US ...</div>
<div class="a" style="left:406.4px;top:496.82px;font-size:7.05px;color:#4a4d50;font-weight:normal;line-height:7.05px;">Citibank</div>
<div class="a" style="left:580.5px;top:496.82px;font-size:7.05px;color:#2d6ca8;font-weight:normal;line-height:7.05px;">100000000...</div>
<div class="a" style="right:77.40px;top:496.82px;font-size:7.05px;color:#4a4d50;font-weight:normal;line-height:7.05px;">09/30/2019</div>
<div class="a" style="left:48.2px;top:509.33px;font-size:7.05px;color:#4a4d50;font-weight:normal;line-height:7.05px;">1710 (...</div>
<div class="a" style="left:87px;top:509.33px;font-size:7.05px;color:#4a4d50;font-weight:normal;line-height:7.05px;">Fixe...</div>
<div class="a" style="left:116.8px;top:509.33px;font-size:7.05px;color:#4a4d50;font-weight:normal;line-height:7.05px;">Fixed-Term Deposit/Borrowing</div>
<div class="a" style="left:359.7px;top:509.33px;font-size:7.05px;color:#4a4d50;font-weight:normal;line-height:7.05px;">USD (US ...</div>
<div class="a" style="left:406.4px;top:509.33px;font-size:7.05px;color:#4a4d50;font-weight:normal;line-height:7.05px;">Citibank</div>
<div class="a" style="left:580.5px;top:509.33px;font-size:7.05px;color:#2d6ca8;font-weight:normal;line-height:7.05px;">100000000...</div>
<div class="a" style="right:77.40px;top:509.33px;font-size:7.05px;color:#4a4d50;font-weight:normal;line-height:7.05px;">11/22/2019</div>
<div class="a" style="left:24.6px;top:518.8px;width:913.70px;height:0.80px;background:#cfcfcf;"></div>
<div class="a" style="left:24.2px;top:388px;width:0.60px;height:131.60px;background:#e6e6e6;"></div>
<div class="a" style="left:24.6px;top:533px;width:19.40px;height:8.50px;background:#f2f2f2;"></div>
<div class="a" style="left:938.3px;top:406.7px;width:8.20px;height:134.80px;background:#f7f7f7;"></div>
<div class="a" style="left:946.2px;top:388px;width:0.80px;height:153.50px;background:#e8e8e8;"></div>
<div class="a" style="left:940.2px;top:406.6px;width:5.00px;height:50.90px;background:#8c8c8c;"></div>
<div class="a" style="left:44px;top:534.8px;width:769.80px;height:5.40px;background:#8c8c8c;"></div>
</body></html>
